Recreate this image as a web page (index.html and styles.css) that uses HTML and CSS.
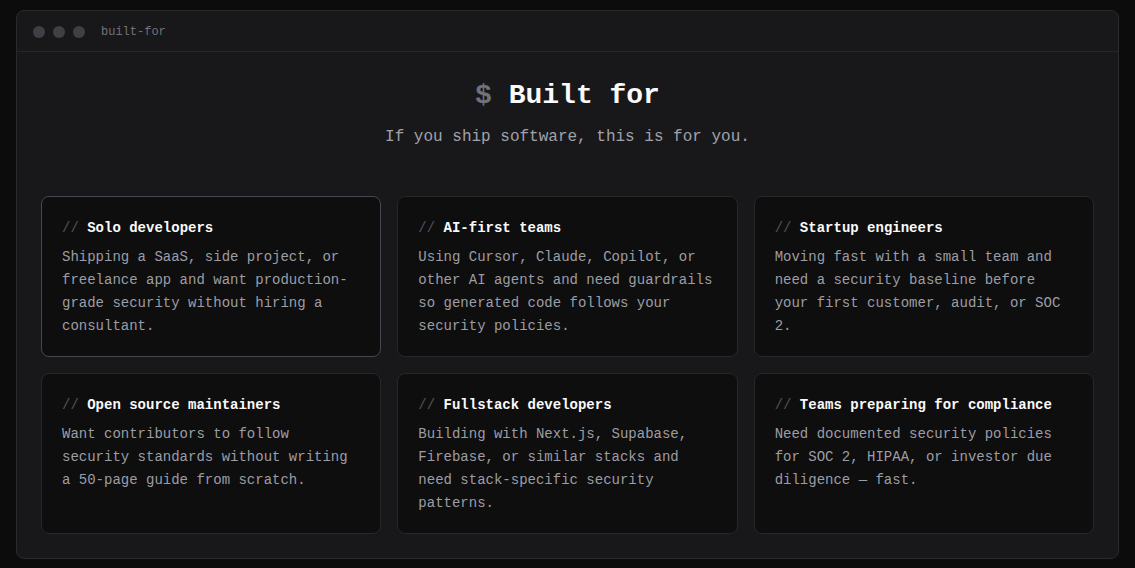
FILE: index.html
```html
<!DOCTYPE html>
<html lang="en">
<head>
<meta charset="utf-8">
<title>built-for</title>
<link rel="stylesheet" href="styles.css">
</head>
<body>
<div class="window">
  <div class="titlebar">
    <span class="dot"></span><span class="dot"></span><span class="dot"></span>
    <span class="wtitle">built-for</span>
  </div>
  <div class="content">
    <h1 class="heading"><span class="prompt">$</span> Built for</h1>
    <p class="sub">If you ship software, this is for you.</p>
    <div class="grid">
      <div class="card active">
        <div class="ctitle"><span class="slash">//</span> Solo developers</div>
        <p class="cdesc">Shipping a SaaS, side project, or freelance app and want production-grade security without hiring a consultant.</p>
      </div>
      <div class="card">
        <div class="ctitle"><span class="slash">//</span> AI-first teams</div>
        <p class="cdesc">Using Cursor, Claude, Copilot, or other AI agents and need guardrails so generated code follows your security policies.</p>
      </div>
      <div class="card">
        <div class="ctitle"><span class="slash">//</span> Startup engineers</div>
        <p class="cdesc">Moving fast with a small team and need a security baseline before your first customer, audit, or SOC 2.</p>
      </div>
      <div class="card">
        <div class="ctitle"><span class="slash">//</span> Open source maintainers</div>
        <p class="cdesc">Want contributors to follow security standards without writing a 50-page guide from scratch.</p>
      </div>
      <div class="card">
        <div class="ctitle"><span class="slash">//</span> Fullstack developers</div>
        <p class="cdesc">Building with Next.js, Supabase, Firebase, or similar stacks and need stack-specific security patterns.</p>
      </div>
      <div class="card">
        <div class="ctitle"><span class="slash">//</span> Teams preparing for compliance</div>
        <p class="cdesc">Need documented security policies for SOC 2, HIPAA, or investor due diligence — fast.</p>
      </div>
    </div>
  </div>
</div>
</body>
</html>
```
FILE: styles.css
```css
* { box-sizing: border-box; }
html, body { margin: 0; padding: 0; }
body {
  background: #0c0c0d;
  font-family: "Liberation Mono", "DejaVu Sans Mono", monospace;
  color: #a1a1aa;
  padding: 10px 16px 0 16px;
}
.window {
  background: #18181a;
  border: 1px solid #2a2a2d;
  border-radius: 8px;
  width: 1103px;
  height: 549px;
  overflow: hidden;
}
.titlebar {
  height: 41px;
  border-bottom: 1px solid #27272a;
  display: flex;
  align-items: center;
  padding: 1px 0 0 16px;
  gap: 8px;
}
.dot {
  width: 12px;
  height: 12px;
  border-radius: 50%;
  background: #3f3f46;
}
.wtitle {
  margin-left: 8px;
  font-size: 12px;
  color: #71717a;
}
.content {
  padding: 27px 24px 24px 24px;
}
.heading {
  margin: 0;
  text-align: center;
  font-size: 28px;
  line-height: 34px;
  font-weight: 700;
  color: #fafafa;
}
.prompt { color: #71717a; }
.sub {
  margin: 12px 0 0 0;
  text-align: center;
  font-size: 16px;
  line-height: 24px;
  color: #a1a1aa;
}
.grid {
  margin-top: 47px;
  display: grid;
  grid-template-columns: repeat(3, 1fr);
  gap: 16px 16px;
}
.card {
  background: #0e0e0f;
  border: 1px solid #27272a;
  border-radius: 8px;
  padding: 21px 20px 20px 20px;
  height: 161px;
}
.card.active { border-color: #47474e; }
.ctitle {
  font-size: 14px;
  line-height: 21px;
  font-weight: 700;
  color: #fafafa;
}
.slash { color: #52525b; font-weight: 400; }
.cdesc {
  margin: 7px 0 0 0;
  font-size: 14px;
  line-height: 23px;
  color: #9d9da4;
}
```
